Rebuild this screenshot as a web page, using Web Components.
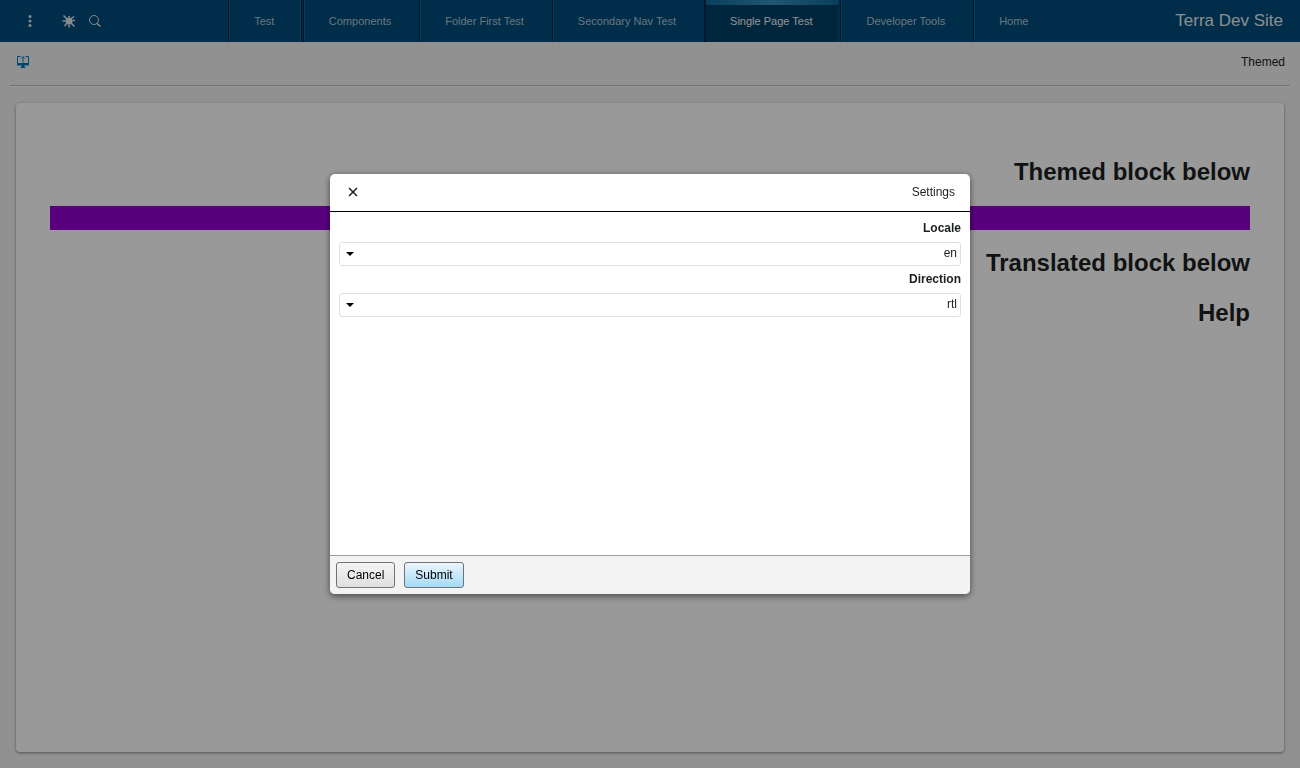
<!DOCTYPE html>
<html lang="en" dir="rtl">
<head>
<meta charset="utf-8">
<title>Terra Dev Site</title>
<style>
html, body { margin: 0; height: 100%; }
body { font-family: "Liberation Sans", Arial, sans-serif; font-size: 12px; color: #1c1f21; }
</style>
</head>
<body>
<dev-site></dev-site>
<settings-modal></settings-modal>
<script>
const define = (name, html) => customElements.define(name, class extends HTMLElement {
  constructor() {
    super();
    this.attachShadow({ mode: 'open' }).innerHTML = html;
  }
});

define('nav-tab', `
<style>
:host { display: flex; box-sizing: border-box; height: 42px; min-width: 72px; }
a { flex: 1; box-sizing: border-box; display: flex; align-items: center; justify-content: center;
  padding: 0 26px 0 24px; font-size: 11px; line-height: 16px; color: #b2c5d2; text-decoration: none; white-space: nowrap;
  border-left: 1px solid #0a6096; box-shadow: -1px 0 #00243f; }
:host([active]) a { color: #f0f4f6; background: linear-gradient(90deg, #10699c, #3a8fbe 50%, #10699c) top / 100% 5px no-repeat border-box, #004068;
  border-left-color: #003050; }
:host(:last-child) a { border-right: 1px solid #0a6096; padding-right: 25px; box-shadow: -1px 0 #00243f, 1px 0 #00243f; }
</style>
<a href="#"><slot></slot></a>`);

define('site-header', `
<style>
:host { display: flex; align-items: center; height: 42px; background: #004b7b; color: #fff; }
h1 { margin: 0; padding-right: 17px; font-size: 17px; font-weight: 400; line-height: 24px; color: #e5edf2; white-space: nowrap; }
nav { flex: 1; display: flex; justify-content: center; gap: 3px; padding-left: 6px; }
.tools { display: flex; align-items: center; padding-left: 23px; }
button { border: 0; padding: 0; margin: 0; background: none; display: flex; color: #e0e8ed; }
svg { width: 14px; height: 14px; }
.debug { margin: 0 12px 0 25px; }
</style>
<h1>Terra Dev Site</h1>
<nav aria-label="Main">
<nav-tab>Home</nav-tab><nav-tab>Developer Tools</nav-tab><nav-tab active>Single Page Test</nav-tab><nav-tab>Secondary Nav Test</nav-tab><nav-tab>Folder First Test</nav-tab><nav-tab>Components</nav-tab><nav-tab>Test</nav-tab>
</nav>
<div class="tools">
<button aria-label="Search"><svg viewBox="0 0 28 28" fill="none" stroke="currentColor"><circle cx="12" cy="12" r="9" stroke-width="2"/><path d="M18 19l7 6" stroke-width="3"/></svg></button>
<button class="debug" aria-label="Extensions"><svg viewBox="0 0 28 28" fill="none" stroke="currentColor"><circle cx="14" cy="14" r="7" fill="currentColor" stroke="none"/><path d="M3 3l7 7M18 18l7 7M24 5l-7 5M1 14h6M21 13h5M5 24l5-6M14 21v6M14 7V4" stroke-width="3"/></svg></button>
<button aria-label="Menu"><svg viewBox="0 0 28 28" fill="currentColor"><circle cx="14" cy="5" r="3"/><circle cx="14" cy="14" r="3"/><circle cx="14" cy="23" r="3"/></svg></button>
</div>`);

define('page-toolbar', `
<style>
:host { display: flex; align-items: flex-start; justify-content: space-between; box-sizing: border-box; height: 44px;
  margin: 0 10px; padding: 13px 5px 0 6px; border-bottom: 1px solid #bcbfc0; box-shadow: 0 1px #fff; line-height: 14px; }
button { border: 0; padding: 0; background: none; display: flex; }
svg { width: 14px; height: 14px; }
</style>
<span>Themed</span>
<button aria-label="Expand"><svg viewBox="0 0 28 28" fill="none" stroke="#0079be"><path d="M9 3H3V17M19 3h6V17" stroke-width="2"/><path d="M2 16h24v5H2zM11 21h6v3h2v2H9v-2h2z" fill="#0079be" stroke="none"/><path d="M14 15V4M10 7l4-4 4 4" stroke-width="2"/></svg></button>`);

define('page-card', `
<style>
:host { display: block; flex: 1; box-sizing: border-box; margin: 17px 16px 16px; padding: 54px 34px 0; background: #fff;
  border-radius: 4px; box-shadow: 0 1px 3px rgba(0,0,0,.45); }
h2 { margin: 0; font-size: 24px; line-height: 30px; }
.themed { height: 24px; margin: 19px 0 18px; background: #9400d3; }
.help { margin-top: 20px; }
</style>
<h2>Themed block below</h2>
<div class="themed"></div>
<h2>Translated block below</h2>
<h2 class="help">Help</h2>`);

define('dev-site', `
<style>:host { display: flex; flex-direction: column; min-height: 100%; background: #f2f2f2; }</style>
<site-header></site-header><page-toolbar></page-toolbar><page-card></page-card>`);

define('select-field', `
<style>
:host { display: block; }
label { display: block; font-weight: 700; line-height: 16px; margin-bottom: 6px; }
.box { position: relative; }
select { display: block; appearance: none; box-sizing: border-box; width: 100%; height: 24px; margin: 0; padding: 0 3px 2px 24px;
  border: 1px solid #dedfe0; border-radius: 3px; background: #fff; font: inherit; color: inherit; }
svg { position: absolute; left: 7px; top: 10px; width: 8px; height: 4px; pointer-events: none; }
</style>
<label for="field"></label>
<div class="box"><select id="field"><option></option></select><svg viewBox="0 0 8 4"><path d="M0 0h8L4 4z"/></svg></div>`);

define('action-button', `
<style>
:host { display: block; }
button { box-sizing: border-box; height: 26px; padding: 0 10px; border: 1px solid #6f7477; border-radius: 3px;
  font: inherit; line-height: 16px; color: #000; background: linear-gradient(#f4f4f4, #dedfe0); }
:host([primary]) button { background: linear-gradient(#ebf6fd, #a5daf5); }
</style>
<button type="button"><slot></slot></button>`);

define('settings-modal', `
<style>
:host { position: fixed; inset: 0; display: flex; align-items: center; justify-content: center; background: rgba(0,0,0,.4); }
section { display: flex; flex-direction: column; width: 640px; max-width: 100%; height: 420px; max-height: 100%; background: #fff;
  border-radius: 5px; overflow: hidden; box-shadow: 0 2px 7px rgba(0,0,0,.55); }
header { display: flex; align-items: center; justify-content: space-between; box-sizing: border-box; height: 38px;
  padding: 0 15px 1px 18px; border-bottom: 1px solid #000; line-height: 16px; }
h2 { margin: 0; font-size: 12px; font-weight: 400; }
header button { border: 0; padding: 0; background: none; display: flex; }
header svg { width: 10px; height: 10px; }
main { flex: 1; display: flex; flex-direction: column; gap: 5px; padding: 8px 9px; }
footer { display: flex; justify-content: flex-end; gap: 9px; padding: 6px; border-top: 1px solid #9b9fa1; background: #f3f3f3; }
</style>
<section role="dialog" aria-labelledby="title">
<header><h2 id="title">Settings</h2><button aria-label="Close"><svg viewBox="0 0 20 20"><path d="M2 2l16 16M18 2L2 18" stroke="#1c1f21" stroke-width="3"/></svg></button></header>
<main><select-field label="Locale" value="en"></select-field><select-field label="Direction" value="rtl"></select-field></main>
<footer><action-button primary>Submit</action-button><action-button>Cancel</action-button></footer>
</section>`);

document.querySelector('settings-modal').shadowRoot.querySelectorAll('select-field').forEach(field => {
  field.shadowRoot.querySelector('label').textContent = field.getAttribute('label');
  field.shadowRoot.querySelector('option').textContent = field.getAttribute('value');
});
</script>
</body>
</html>
